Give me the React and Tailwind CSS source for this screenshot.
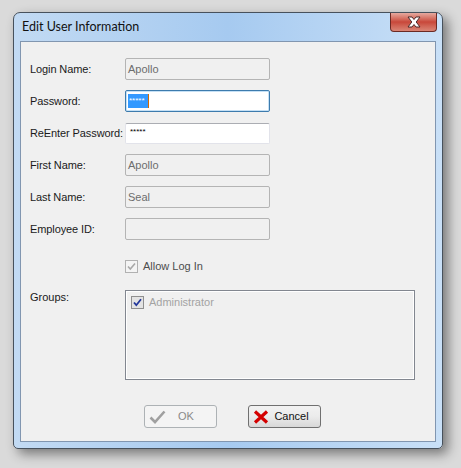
const Field = ({ label, value, disabled, children }) => (
  <div className="flex items-center h-[22px]">
    <div className="w-[95px] text-[11px] tracking-[-0.1px] text-[#1a1a1a]">{label}</div>
    {disabled ? (
      <div className="w-[145px] h-[22px] border border-[#b4b4b4] bg-[#f0f0f0] rounded-[2px] flex items-center px-[2px] text-[11px] text-[#6d6d6d]">
        {value}
      </div>
    ) : (
      children
    )}
  </div>
);

const CloseGlyph = () => (
  <svg width="16" height="12" viewBox="0 0 16 12">
    <path
      d="M2 1 L6 1 L8 3.5 L10 1 L14 1 L10.2 6 L14 11 L10 11 L8 8.5 L6 11 L2 11 L5.8 6 Z"
      fill="#ffffff"
      stroke="#4a2a2a"
      strokeWidth="1"
      strokeLinejoin="round"
    />
  </svg>
);

export default function App() {
  return (
    <div className="w-[461px] h-[468px] bg-[#dadada] pl-[13px] pt-[12px] font-['Liberation_Sans',Arial,sans-serif]">
      {/* window */}
      <div className="w-[430px] h-[437px] flex flex-col rounded-t-[7px] rounded-b-[5px] border border-[#47515c] bg-gradient-to-r from-[#c2daf3] via-[#a6caf0] to-[#c9e0f7] shadow-[5px_5px_12px_rgba(0,0,0,0.45)]">
        {/* title bar */}
        <div className="h-[28px] flex justify-between items-start">
          <div className="pl-[8px] pt-[5px] text-[12.5px] text-[#111] font-['Lato',sans-serif]">
            Edit User Information
          </div>
          <div className="mr-[5px] w-[47px] h-[19px] rounded-b-[4px] border border-t-0 border-[#6b2a24] bg-gradient-to-b from-[#e5a99f] via-[#c8473a] to-[#d98576] flex items-center justify-center">
            <CloseGlyph />
          </div>
        </div>

        {/* client area */}
        <div className="mx-[6px] mb-[6px] flex-1 border border-[#8196b0] bg-[#f0f0f0] pl-[9px] pt-[16px]">
          <div className="flex flex-col gap-[10px]">
            <Field label="Login Name:" value="Apollo" disabled />
            <Field label="Password:">
              <div className="w-[145px] h-[22px] border border-[#3d7bad] rounded-[2px] bg-white flex items-center px-[2px] shadow-[inset_0_0_0_1px_#c5e0f5]">
                <span className="bg-[#3399ff] text-white text-[8px] leading-[14px] px-[1px] w-[20px]">
                  *****
                </span>
                <span className="w-[1px] h-[14px] bg-[#d56a00]" />
              </div>
            </Field>
            <Field label="ReEnter Password:">
              <div className="w-[145px] h-[21px] border border-[#e2e3ea] border-t-[#abadb3] rounded-[2px] bg-white flex items-start pt-[2px] px-[4px] text-[8px] text-black">
                *****
              </div>
            </Field>
            <Field label="First Name:" value="Apollo" disabled />
            <Field label="Last Name:" value="Seal" disabled />
            <Field label="Employee ID:" value="" disabled />
          </div>

          {/* allow log in */}
          <div className="flex items-center gap-[5px] pl-[95px] mt-[19px] h-[14px]">
            <div className="w-[13px] h-[13px] border border-[#b1b1b1] bg-[#f4f4f4] flex items-center justify-center">
              <svg width="9" height="9" viewBox="0 0 9 9">
                <path d="M1 4.5 L3.3 7 L8 1.5" fill="none" stroke="#a8a8a8" strokeWidth="1.6" />
              </svg>
            </div>
            <span className="text-[11px] text-[#4d4d4d]">Allow Log In</span>
          </div>

          {/* groups */}
          <div className="flex mt-[17px]">
            <div className="w-[95px] text-[11px] text-[#1a1a1a] -mt-[1px]">Groups:</div>
            <div className="w-[290px] h-[90px] border border-[#828790] shadow-[inset_0_0_0_1px_#ffffff] bg-[#f0f0f0] px-[5px] pt-[5px]">
              <div className="flex items-start gap-[5px]">
                <div className="w-[13px] h-[13px] border border-[#8f8f8f] bg-[#e3e3e3] flex items-center justify-center">
                  <svg width="9" height="9" viewBox="0 0 9 9">
                    <path d="M1 4.5 L3.3 7.2 L8 1.2" fill="none" stroke="#23379b" strokeWidth="1.8" />
                  </svg>
                </div>
                <span className="text-[11px] leading-[13px] text-[#a3a3a3]">Administrator</span>
              </div>
            </div>
          </div>

          {/* buttons */}
          <div className="flex gap-[31px] pl-[114px] mt-[25px]">
            <div className="w-[73px] h-[23px] rounded-[3px] border border-[#adb2b5] bg-[#f4f4f4] flex items-center px-[4px]">
              <svg width="17" height="14" viewBox="0 0 17 14">
                <path d="M1.5 7.5 L6 12 L15.5 1.5" fill="none" stroke="#a0a0a0" strokeWidth="2.6" />
              </svg>
              <span className="flex-1 text-center text-[11px] text-[#8a8a8a] pr-[6px]">OK</span>
            </div>
            <div className="w-[73px] h-[23px] rounded-[3px] border border-[#707070] bg-gradient-to-b from-[#f2f2f2] via-[#ebebeb] to-[#d8d8d8] flex items-center px-[4px]">
              <svg width="16" height="14" viewBox="0 0 16 14">
                <path d="M2 1.5 L14 12.5 M14 1.5 L2 12.5" fill="none" stroke="#d40000" strokeWidth="3.2" />
              </svg>
              <span className="flex-1 text-center text-[11px] text-[#111] pr-[2px]">Cancel</span>
            </div>
          </div>
        </div>
      </div>
    </div>
  );
}
